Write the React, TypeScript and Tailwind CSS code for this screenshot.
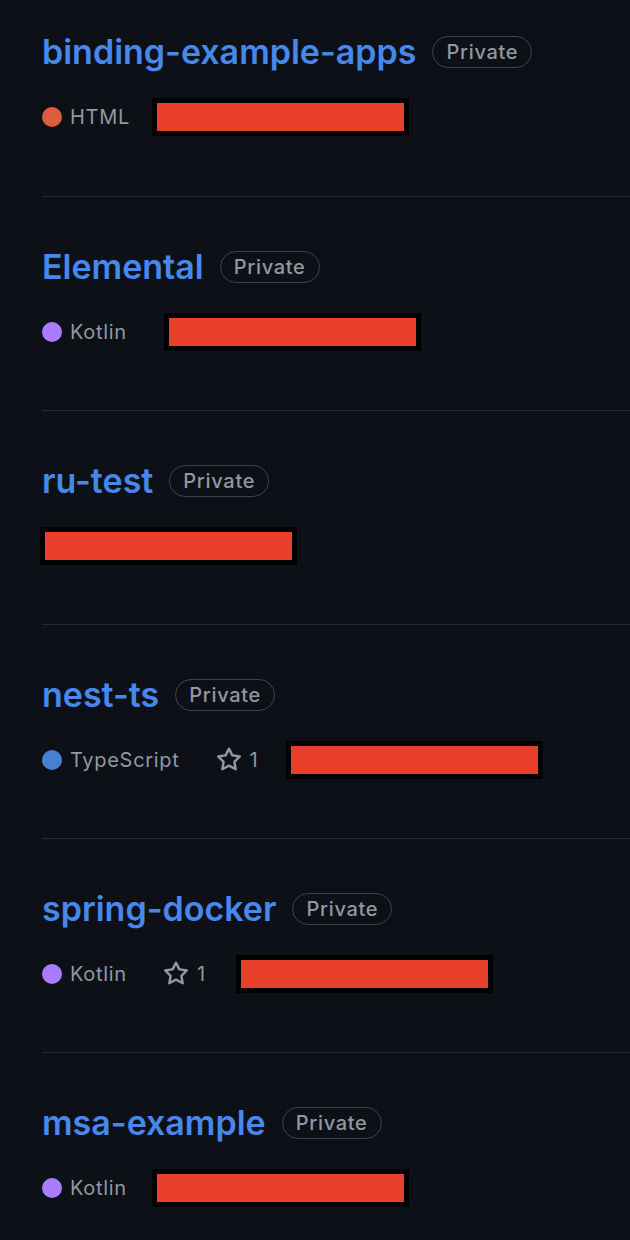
const STAR =
  'M8 .25a.75.75 0 0 1 .673.418l1.882 3.815 4.21.612a.75.75 0 0 1 .416 1.279l-3.046 2.97.719 4.192a.751.751 0 0 1-1.088.791L8 12.347l-3.766 1.98a.75.75 0 0 1-1.088-.79l.72-4.194L.818 6.374a.75.75 0 0 1 .416-1.28l4.21-.611L7.327.668A.75.75 0 0 1 8 .25Zm0 2.445L6.615 5.5a.75.75 0 0 1-.564.41l-3.097.45 2.24 2.184a.75.75 0 0 1 .216.664l-.528 3.084 2.769-1.456a.75.75 0 0 1 .698 0l2.77 1.456-.53-3.084a.75.75 0 0 1 .216-.664l2.24-2.183-3.096-.45a.75.75 0 0 1-.564-.41L8 2.694Z';

interface Repo {
  name: string;
  lang?: string;
  color?: string;
  stars?: number;
  boxGap: string;
}

const repos: Repo[] = [
  { name: 'binding-example-apps', lang: 'HTML', color: '#dc5d3b', boxGap: 'ml-[22px]' },
  { name: 'Elemental', lang: 'Kotlin', color: '#a97bff', boxGap: 'ml-[37px]' },
  { name: 'ru-test', boxGap: '-ml-[2px]' },
  { name: 'nest-ts', lang: 'TypeScript', color: '#4a7fcf', stars: 1, boxGap: 'ml-[28px]' },
  { name: 'spring-docker', lang: 'Kotlin', color: '#a97bff', stars: 1, boxGap: 'ml-[30px]' },
  { name: 'msa-example', lang: 'Kotlin', color: '#a97bff', boxGap: 'ml-[25px]' },
];

function Redacted({ className }: { className: string }) {
  return <span className={`block h-[38px] w-[257px] shrink-0 border-[5px] border-black bg-[#e8402a] ${className}`} />;
}

export default function App() {
  return (
    <div className="min-h-[1240px] overflow-hidden bg-[#0d1117] font-['Inter','Liberation_Sans',sans-serif]">
      <ul className="ml-[42px]">
        {repos.map((repo, i) => (
          <li
            key={repo.name}
            className={i === 0 ? 'pt-[28px] pb-[60px]' : 'border-t border-[#262b32] pt-[46px] pb-[59px]'}
          >
            {/* Title + visibility label */}
            <div className="flex h-[48px] items-center">
              <a className="text-[34px] font-semibold leading-[48px] text-[#4788ec]">{repo.name}</a>
              <span className="ml-[16px] flex h-[32px] items-center rounded-full border border-[#3d444d] px-[13px] text-[20px] font-medium tracking-[0.7px] text-[#9198a1]">
                Private
              </span>
            </div>

            {/* Meta row */}
            <div className="mt-[22px] flex h-[38px] items-center text-[20px] tracking-[0.7px] text-[#9198a1]">
              {repo.lang && (
                <span className="flex items-center">
                  <span className="size-[20px] rounded-full" style={{ background: repo.color }} />
                  <span className="ml-[8px]">{repo.lang}</span>
                </span>
              )}
              {repo.stars !== undefined && (
                <span className="ml-[36px] flex items-center">
                  <svg viewBox="0 0 16 16" width="26" height="26" fill="currentColor">
                    <path d={STAR} />
                  </svg>
                  <span className="ml-[8px]">{repo.stars}</span>
                </span>
              )}
              <Redacted className={repo.boxGap} />
            </div>
          </li>
        ))}
      </ul>
    </div>
  );
}
